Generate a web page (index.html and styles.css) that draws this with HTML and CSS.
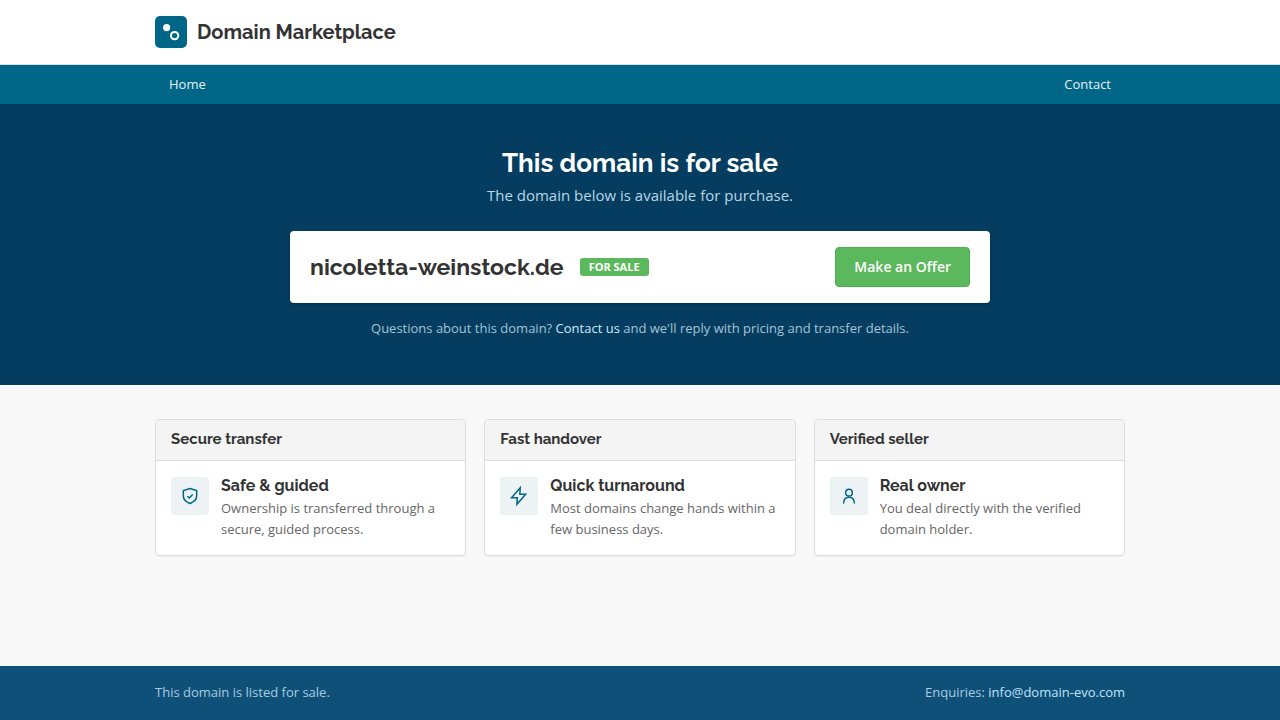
FILE: index.html
```html
<!DOCTYPE html>
<html lang="en">

<head>
  <meta charset="UTF-8">
  <meta name="viewport" content="width=device-width, initial-scale=1.0">
  <title>nicoletta-weinstock.de</title>
  <link rel="stylesheet" href="styles.css">
</head>

<body>
  <header class="header">
    <div class="container">
      <a class="brand" href="/">
        <svg class="brand__logo" viewBox="0 0 32 32" aria-hidden="true">
          <rect width="32" height="32" rx="5" fill="#006687" />
          <circle cx="11.6" cy="11.6" r="3.6" fill="#fff" />
          <circle cx="19.6" cy="19.6" r="3.7" fill="none" stroke="#fff" stroke-width="2" />
        </svg>
        <span class="brand__name">Domain Marketplace</span>
      </a>
    </div>
  </header>

  <nav class="nav">
    <div class="container nav__inner">
      <a class="nav__link" href="/">Home</a>
      <a class="nav__link" href="/contact">Contact</a>
    </div>
  </nav>

  <section class="hero">
    <div class="container">
      <h1 class="hero__title">This domain is for sale</h1>
      <p class="hero__lead">The domain below is available for purchase.</p>

      <div class="offer">
        <div class="offer__domain">
          <span class="offer__name">nicoletta-weinstock.de</span>
          <span class="offer__label">FOR SALE</span>
        </div>
        <button class="offer__button" type="button">Make an Offer</button>
      </div>

      <p class="hero__note">Questions about this domain? <a href="/contact">Contact us</a> and we'll reply with pricing and transfer details.</p>
    </div>
  </section>

  <main class="main">
    <div class="container features">
      <section class="panel">
        <h2 class="panel__heading">Secure transfer</h2>
        <div class="panel__body">
          <div class="panel__icon">
            <svg viewBox="0 0 24 24" aria-hidden="true">
              <path d="M12 3l8 2.500v6.500c0 4.500-3 7-8 9-5-2-8-4.500-8-9V5.500z" />
              <path d="M9 12.200l2.200 2.200 4-4.200" />
            </svg>
          </div>
          <div>
            <h3 class="panel__title">Safe &amp; guided</h3>
            <p class="panel__text">Ownership is transferred through a secure, guided process.</p>
          </div>
        </div>
      </section>

      <section class="panel">
        <h2 class="panel__heading">Fast handover</h2>
        <div class="panel__body">
          <div class="panel__icon">
            <svg viewBox="0 0 24 24" aria-hidden="true">
              <path d="M13.500 2L3 14h7l-.5 8L20 10h-7z" />
            </svg>
          </div>
          <div>
            <h3 class="panel__title">Quick turnaround</h3>
            <p class="panel__text">Most domains change hands within a few business days.</p>
          </div>
        </div>
      </section>

      <section class="panel">
        <h2 class="panel__heading">Verified seller</h2>
        <div class="panel__body">
          <div class="panel__icon">
            <svg viewBox="0 0 24 24" aria-hidden="true">
              <circle cx="12" cy="8" r="4" />
              <path d="M5.500 21c0-4.500 2.500-7.500 6.500-7.500s6.500 3 6.500 7.500" />
            </svg>
          </div>
          <div>
            <h3 class="panel__title">Real owner</h3>
            <p class="panel__text">You deal directly with the verified domain holder.</p>
          </div>
        </div>
      </section>
    </div>
  </main>

  <footer class="footer">
    <div class="container footer__inner">
      <span>This domain is listed for sale.</span>
      <span>Enquiries: <a href="mailto:info@domain-evo.com">info@domain-evo.com</a></span>
    </div>
  </footer>
</body>

</html>
```
FILE: styles.css
```css
*,
*::before,
*::after {
  box-sizing: border-box;
}

body {
  margin: 0;
  min-height: 100vh;
  display: flex;
  flex-direction: column;
  background: #f8f8f8;
  color: #333;
  font-family: "Open Sans", "Noto Sans", sans-serif;
  font-size: 14px;
  line-height: 22px;
}

h1,
h2,
h3,
p {
  margin: 0;
}

a {
  text-decoration: none;
}

.container {
  width: 100%;
  max-width: 1000px;
  margin: 0 auto;
  padding: 0 15px;
}

/* header */
.header {
  padding: 16px 0;
  background: #fff;
  border-bottom: 1px solid #ddd;
}

.brand {
  display: inline-flex;
  align-items: center;
  gap: 10px;
  vertical-align: top;
  color: #333;
}

.brand__logo {
  display: block;
  width: 32px;
  height: 32px;
}

.brand__name {
  font-family: Raleway, "Open Sans", sans-serif;
  font-size: 20px;
  font-weight: 700;
}

/* nav */
.nav {
  background: #006687;
}

.nav__inner {
  display: flex;
  justify-content: space-between;
}

.nav__link {
  padding: 9px 14px;
  color: #e5f2f7;
  font-size: 13px;
  line-height: 21px;
}

/* hero */
.hero {
  padding: 42px 0 46px;
  background: #043d5f;
  text-align: center;
}

.hero__title {
  color: #fff;
  font-family: Raleway, "Open Sans", sans-serif;
  font-size: 26px;
  font-weight: 700;
  line-height: 34px;
}

.hero__lead {
  margin-top: 4px;
  color: #b9d6e6;
  font-size: 15px;
  line-height: 22px;
}

.offer {
  display: flex;
  align-items: center;
  justify-content: space-between;
  gap: 16px;
  max-width: 700px;
  margin: 25px auto 0;
  padding: 16px 20px;
  background: #fff;
  border-radius: 4px;
  box-shadow: 0 1px 3px rgba(0, 0, 0, .3);
}

.offer__domain {
  display: flex;
  align-items: center;
  gap: 16px;
}

.offer__name {
  font-family: Raleway, "Open Sans", sans-serif;
  font-size: 23px;
  font-weight: 700;
  line-height: 36px;
}

.offer__label {
  padding: 0 9px;
  background: #5cb85c;
  border-radius: 3px;
  color: #fff;
  font-size: 11px;
  font-weight: 700;
  line-height: 18px;
}

.offer__button {
  padding: 8px 18px;
  background: #5cb85c;
  border: 1px solid #4cae4c;
  border-radius: 4px;
  color: #fff;
  font-family: inherit;
  font-size: 14px;
  font-weight: 600;
  line-height: 22px;
  cursor: pointer;
}

.hero__note {
  margin-top: 14px;
  color: #a3c4d8;
  font-size: 13px;
}

.hero__note a {
  color: #cfeaff;
}

/* features */
.main {
  flex: 1;
  padding: 34px 0;
}

.features {
  display: grid;
  grid-template-columns: repeat(3, 1fr);
  gap: 18px;
}

.panel {
  background: #fff;
  border: 1px solid #ddd;
  border-radius: 4px;
  box-shadow: 0 1px 1px rgba(0, 0, 0, .05);
  overflow: hidden;
}

.panel__heading {
  padding: 8px 15px 10px;
  background: #f4f4f4;
  border-bottom: 1px solid #ddd;
  font-family: Raleway, "Open Sans", sans-serif;
  font-size: 15px;
  font-weight: 700;
  line-height: 22px;
}

.panel__body {
  display: flex;
  gap: 12px;
  padding: 16px 15px 15px;
}

.panel__icon {
  display: flex;
  flex: none;
  align-items: center;
  justify-content: center;
  width: 38px;
  height: 38px;
  background: #edf3f5;
  border-radius: 3px;
}

.panel__icon svg {
  width: 20px;
  height: 20px;
  fill: none;
  stroke: #006687;
  stroke-width: 1.8;
}

.panel__title {
  font-family: Raleway, "Open Sans", sans-serif;
  font-size: 16px;
  font-weight: 700;
  line-height: 18px;
}

.panel__text {
  margin-top: 3px;
  color: #666;
  font-size: 13px;
  line-height: 21px;
}

/* footer */
.footer {
  padding: 15px 0 17px;
  background: #0f5079;
  color: #a9cbe0;
  font-size: 13px;
}

.footer__inner {
  display: flex;
  justify-content: space-between;
}

.footer a {
  color: #bfe3fa;
}

@media (max-width: 760px) {
  .features {
    grid-template-columns: 1fr;
  }

  .offer {
    flex-direction: column;
  }
}
```
